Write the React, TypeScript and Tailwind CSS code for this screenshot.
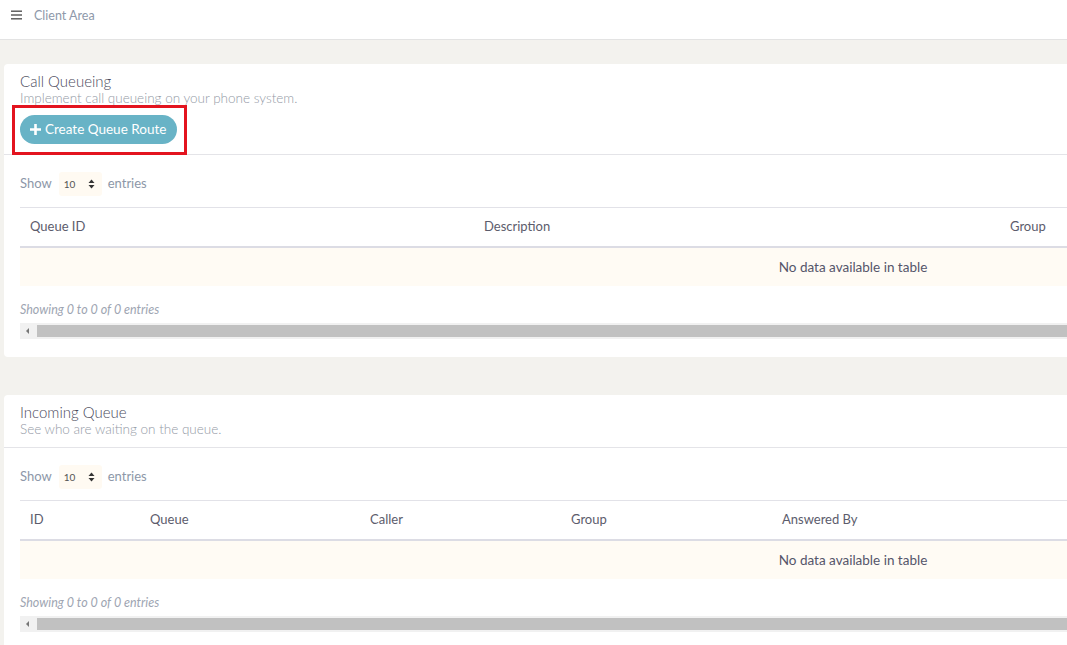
import React from "react";

const font = { fontFamily: "Lato, 'Noto Sans', sans-serif" };

interface Column {
  label: string;
  width: number;
}

const ShowEntries: React.FC = () => (
  <div className="flex items-center h-[24px] text-[13px] text-[#8d97a8]">
    <span>Show</span>
    <div className="ml-[7px] mr-[6px] flex items-center justify-between w-[43px] h-[24px] px-[4px] bg-[#fffaf2] rounded-[3px] text-[10px] text-[#555]">
      <span className="pl-[1px]">10</span>
      <svg width="7" height="10" viewBox="0 0 7 10" className="mr-[3px]">
        <path d="M3.5 0.5 L6.5 4 L0.5 4 Z" fill="#333" />
        <path d="M3.5 9.5 L6.5 6 L0.5 6 Z" fill="#333" />
      </svg>
    </div>
    <span>entries</span>
  </div>
);

const DataTable: React.FC<{ columns: Column[] }> = ({ columns }) => (
  <div>
    <div className="w-[1666px]">
      <div className="flex h-[41px] items-center border-t border-[#e2e2e8] border-b-2 border-b-[#dcdce4] text-[13px] text-[#5c5c6c]">
        {columns.map((c) => (
          <div key={c.label} className="pl-[10px]" style={{ width: c.width }}>
            {c.label}
          </div>
        ))}
      </div>
      <div className="h-[38px] bg-[#fffbf4] flex items-center justify-center text-[13.5px] text-[#55556a]">
        No data available in table
      </div>
    </div>
    <div className="mt-[15px] text-[12.5px] leading-[17px] italic text-[#9ea5b2]">
      Showing 0 to 0 of 0 entries
    </div>
    <div className="mt-[5px] h-[16px] bg-[#f1f1f1] flex items-center">
      <svg width="17" height="16" viewBox="0 0 17 16">
        <path d="M6 8 L9 5 L9 11 Z" fill="#777" />
      </svg>
      <div className="h-[12px] flex-1 bg-[#c1c1c1]" />
    </div>
  </div>
);

const Card: React.FC<{
  title: string;
  subtitle: string;
  children?: React.ReactNode;
  action?: React.ReactNode;
}> = ({ title, subtitle, children, action }) => (
  <div className="ml-[4px] w-[1100px] bg-white rounded-l-[4px]">
    <div className="px-[16px] pt-[7px] pb-[10px] border-b border-[#e4e4e8]">
      <h2 className="text-[15px] leading-[20px] font-light text-[#4b4b5c]">{title}</h2>
      <p className="text-[13.5px] leading-[15px] font-light text-[#949aa6]">{subtitle}</p>
      {action}
    </div>
    <div className="px-[16px] pt-[17px]">{children}</div>
  </div>
);

export default function App() {
  const queueColumns: Column[] = [
    { label: "Queue ID", width: 454 },
    { label: "Description", width: 526 },
    { label: "Group", width: 686 },
  ];
  const incomingColumns: Column[] = [
    { label: "ID", width: 120 },
    { label: "Queue", width: 220 },
    { label: "Caller", width: 201 },
    { label: "Group", width: 211 },
    { label: "Answered By", width: 914 },
  ];

  return (
    <div className="w-[1067px] h-[645px] overflow-hidden bg-[#f3f2ee]" style={font}>
      <header className="h-[40px] bg-white border-b border-[#e3e3e3] flex items-center">
        <svg width="11" height="10" viewBox="0 0 11 10" className="ml-[11px] mt-[-9px]">
          <rect x="0" y="0.5" width="11" height="1.4" fill="#555" />
          <rect x="0" y="4.3" width="11" height="1.4" fill="#555" />
          <rect x="0" y="8.1" width="11" height="1.4" fill="#555" />
        </svg>
        <span className="ml-[12px] mt-[-7px] text-[12.5px] text-[#8e99aa]">Client Area</span>
      </header>

      <div className="pt-[24px]">
        <Card
          title="Call Queueing"
          subtitle="Implement call queueing on your phone system."
          action={
            <div className="relative mt-[9px] w-fit">
              <div className="absolute -left-[8px] -top-[10px] w-[175px] h-[50px] border-[3px] border-[#e3141f]" />
              <button className="flex items-center gap-[4px] h-[29px] pl-[10px] pr-[11px] rounded-full bg-[#68b3c6] text-white text-[13.5px]">
                <svg width="11" height="11" viewBox="0 0 11 11">
                  <path d="M5.5 0 V11 M0 5.5 H11" stroke="#fff" strokeWidth="2.6" />
                </svg>
                Create Queue Route
              </button>
            </div>
          }
        >
          <ShowEntries />
          <div className="mt-[11px]">
            <DataTable columns={queueColumns} />
          </div>
          <div className="h-[18px]" />
        </Card>

        <div className="h-[38px]" />

        <Card title="Incoming Queue" subtitle="See who are waiting on the queue.">
          <ShowEntries />
          <div className="mt-[11px]">
            <DataTable columns={incomingColumns} />
          </div>
          <div className="h-[18px]" />
        </Card>
      </div>
    </div>
  );
}
